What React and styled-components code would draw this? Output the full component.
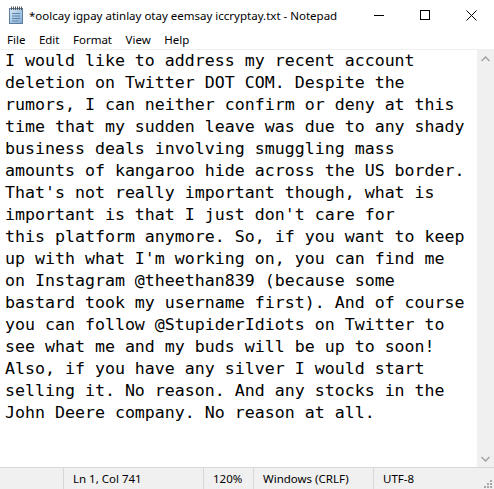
import React from "react";
import styled, { createGlobalStyle } from "styled-components";

const lines = [
  "I would like to address my recent account",
  "deletion on Twitter DOT COM. Despite the",
  "rumors, I can neither confirm or deny at this",
  "time that my sudden leave was due to any shady",
  "business deals involving smuggling mass",
  "amounts of kangaroo hide across the US border.",
  "That's not really important though, what is",
  "important is that I just don't care for",
  "this platform anymore. So, if you want to keep",
  "up with what I'm working on, you can find me",
  "on Instagram @theethan839 (because some",
  "bastard took my username first). And of course",
  "you can follow @StupiderIdiots on Twitter to",
  "see what me and my buds will be up to soon!",
  "Also, if you have any silver I would start",
  "selling it. No reason. And any stocks in the",
  "John Deere company. No reason at all.",
];

const menus = ["File", "Edit", "Format", "View", "Help"];

const cells = [
  { width: 140, text: "Ln 1, Col 741" },
  { width: 50, text: "120%" },
  { width: 120, text: "Windows (CRLF)" },
  { width: 105, text: "UTF-8" },
];

const NotepadIcon = () => (
  <svg width="16" height="18" viewBox="0 0 16 18">
    <defs>
      <linearGradient id="pg" x1="0" y1="0" x2="1" y2="1">
        <stop offset="0" stopColor="#d8eaf7" />
        <stop offset="1" stopColor="#7fa9cf" />
      </linearGradient>
    </defs>
    <rect x="1.5" y="2.5" width="13" height="15" fill="url(#pg)" stroke="#5c7e9e" />
    <path d="M4 7.5h8M4 10h8M4 12.5h8M4 15h6" stroke="#5f86ad" strokeWidth="1" />
    {[3, 5, 7, 9, 11, 13].map((x) => (
      <rect key={x} x={x} y="0.5" width="1" height="3.5" fill="#555" />
    ))}
  </svg>
);

const App = () => {
  return (
    <Window>
      <GlobalStyle />
      <TitleBar>
        <TitleLeft>
          <NotepadIcon />
          <TitleText>*oolcay igpay atinlay otay eemsay iccryptay.txt - Notepad</TitleText>
        </TitleLeft>
        <Controls>
          <ControlBtn>
            <svg width="10" height="10" viewBox="0 0 10 10">
              <path d="M0 5.5h10" stroke="#000" strokeWidth="1" />
            </svg>
          </ControlBtn>
          <ControlBtn>
            <svg width="10" height="10" viewBox="0 0 10 10">
              <rect x="0.5" y="0.5" width="9" height="9" fill="none" stroke="#000" />
            </svg>
          </ControlBtn>
          <ControlBtn>
            <svg width="11" height="11" viewBox="0 0 11 11">
              <path d="M0.5 0.5l10 10M10.5 0.5l-10 10" stroke="#000" strokeWidth="1" />
            </svg>
          </ControlBtn>
        </Controls>
      </TitleBar>

      <MenuBar>
        {menus.map((m) => (
          <MenuItem key={m}>{m}</MenuItem>
        ))}
      </MenuBar>

      <Editor>
        <TextArea>
          {lines.map((l, i) => (
            <Line key={i}>{l}</Line>
          ))}
        </TextArea>
        <ScrollBar>
          <Arrow>
            <svg width="9" height="6" viewBox="0 0 9 6">
              <path d="M0.5 5L4.5 1L8.5 5" fill="none" stroke="#a3a3a3" strokeWidth="1.5" />
            </svg>
          </Arrow>
          <Arrow>
            <svg width="9" height="6" viewBox="0 0 9 6">
              <path d="M0.5 1L4.5 5L8.5 1" fill="none" stroke="#a3a3a3" strokeWidth="1.5" />
            </svg>
          </Arrow>
        </ScrollBar>
      </Editor>

      <StatusBar>
        <Spacer />
        {cells.map((c) => (
          <Cell key={c.text} $width={c.width}>
            {c.text}
          </Cell>
        ))}
        <Grip>
          <svg width="10" height="10" viewBox="0 0 10 10">
            {[
              [8, 2],
              [5, 5],
              [8, 5],
              [2, 8],
              [5, 8],
              [8, 8],
            ].map(([x, y]) => (
              <rect key={`${x}-${y}`} x={x} y={y} width="2" height="2" fill="#a8a8a8" />
            ))}
          </svg>
        </Grip>
      </StatusBar>
    </Window>
  );
};

export default App;

const GlobalStyle = createGlobalStyle`
  html, body {
    margin: 0;
    padding: 0;
    background: #fff;
  }
  body {
    font-family: "Noto Sans", "Open Sans", sans-serif;
  }
`;

const Window = styled.div`
  width: 494px;
  height: 489px;
  display: flex;
  flex-direction: column;
  background: #fff;
  overflow: hidden;
`;

const TitleBar = styled.div`
  height: 30px;
  display: flex;
  align-items: center;
  justify-content: space-between;
  flex-shrink: 0;
`;

const TitleLeft = styled.div`
  display: flex;
  align-items: center;
  gap: 5px;
  padding-left: 8px;
`;

const TitleText = styled.span`
  font-family: "Noto Sans", sans-serif;
  font-size: 11.5px;
  color: #000;
`;

const Controls = styled.div`
  display: flex;
  height: 100%;
`;

const ControlBtn = styled.div`
  width: 46px;
  height: 100%;
  display: flex;
  align-items: center;
  justify-content: center;
`;

const MenuBar = styled.div`
  height: 19px;
  display: flex;
  align-items: center;
  flex-shrink: 0;
  border-bottom: 1px solid #f0f0f0;
`;

const MenuItem = styled.span`
  font-family: "Noto Sans", sans-serif;
  font-size: 11.5px;
  color: #000;
  padding: 0 6.5px 0 7px;
`;

const Editor = styled.div`
  flex: 1;
  display: flex;
  min-height: 0;
`;

const TextArea = styled.div`
  flex: 1;
  padding: 0 0 0 5px;
  font-family: "DejaVu Sans Mono", "Liberation Mono", monospace;
  font-size: 16.6px;
  line-height: 22px;
  color: #000;
`;

const Line = styled.div`
  white-space: pre;
`;

const ScrollBar = styled.div`
  width: 17px;
  background: #f0f0f0;
  display: flex;
  flex-direction: column;
  justify-content: space-between;
`;

const Arrow = styled.div`
  height: 17px;
  display: flex;
  align-items: center;
  justify-content: center;
`;

const StatusBar = styled.div`
  height: 21px;
  flex-shrink: 0;
  display: flex;
  align-items: center;
  background: #f0f0f0;
  border-top: 1px solid #d7d7d7;
  font-family: "Noto Sans", sans-serif;
  font-size: 11.5px;
  color: #000;
`;

const Spacer = styled.div`
  width: 63px;
  height: 100%;
`;

const Cell = styled.div`
  width: ${(p) => p.$width}px;
  height: 100%;
  display: flex;
  align-items: center;
  padding-left: 9px;
  box-sizing: border-box;
  border-left: 1px solid #d7d7d7;
  white-space: nowrap;
`;

const Grip = styled.div`
  flex: 1;
  height: 100%;
  display: flex;
  align-items: flex-end;
  justify-content: flex-end;
  padding: 0 2px 2px 0;
`;
